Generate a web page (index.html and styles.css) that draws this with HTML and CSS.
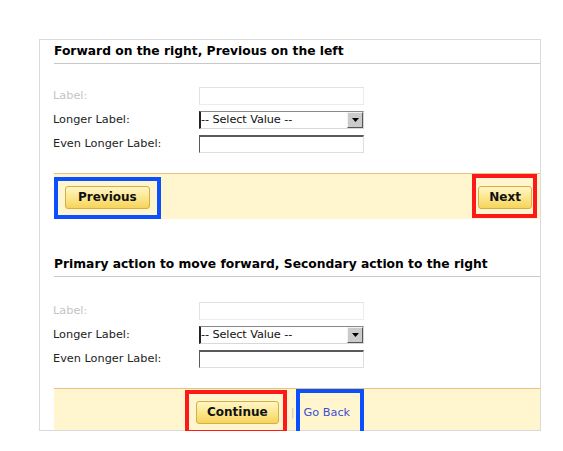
FILE: index.html
```html
<!DOCTYPE html>
<html lang="en">
<head>
<meta charset="utf-8">
<title>Button placement</title>
<link rel="stylesheet" href="styles.css">
</head>
<body>
<div class="panel">
  <section class="section">
    <h2 class="section-title">Forward on the right, Previous on the left</h2>
    <div class="form">
      <div class="row">
        <label class="label label--disabled">Label:</label>
        <input class="field field--disabled" type="text" disabled>
      </div>
      <div class="row">
        <label class="label">Longer Label:</label>
        <div class="select">
          <span class="select-value">-- Select Value --</span>
          <span class="select-arrow"><svg width="7" height="4" viewBox="0 0 7 4"><path d="M0 0h7L3.5 4z" fill="#000"/></svg></span>
        </div>
      </div>
      <div class="row">
        <label class="label">Even Longer Label:</label>
        <input class="field field--inset" type="text">
      </div>
    </div>
    <div class="actions actions--split">
      <button class="btn btn--wide hl hl--blue hl--prev" type="button">Previous</button>
      <button class="btn hl hl--red hl--next" type="button">Next</button>
    </div>
  </section>

  <section class="section section--second">
    <h2 class="section-title">Primary action to move forward, Secondary action to the right</h2>
    <div class="form form--second">
      <div class="row">
        <label class="label label--disabled">Label:</label>
        <input class="field field--disabled" type="text" disabled>
      </div>
      <div class="row">
        <label class="label">Longer Label:</label>
        <div class="select">
          <span class="select-value">-- Select Value --</span>
          <span class="select-arrow"><svg width="7" height="4" viewBox="0 0 7 4"><path d="M0 0h7L3.5 4z" fill="#000"/></svg></span>
        </div>
      </div>
      <div class="row">
        <label class="label">Even Longer Label:</label>
        <input class="field field--inset" type="text">
      </div>
    </div>
    <div class="actions actions--primary actions--last">
      <button class="btn hl hl--red hl--continue" type="button">Continue</button>
      <span class="sep">|</span>
      <a class="link hl hl--blue hl--back" href="#">Go Back</a>
    </div>
  </section>
</div>
</body>
</html>
```

FILE: styles.css
```css
html, body {
  margin: 0;
  padding: 0;
  background: #fff;
}

body {
  font-family: "DejaVu Sans", Verdana, sans-serif;
  color: #222;
  padding: 39px 0 0 39px;
}

.panel {
  width: 486px;
  border: 1px solid #dadada;
  padding: 0 0 0 14px;
}

.section-title {
  margin: 0;
  padding: 4px 0 4px 0;
  font-size: 12.3px;
  line-height: 15px;
  font-weight: bold;
  color: #000;
  border-bottom: 1px solid #c9c9c9;
}

.section--second {
  margin-top: 34px;
}

.form {
  display: flex;
  flex-direction: column;
  gap: 6px;
  margin-top: 23px;
}

.form--second {
  margin-top: 25px;
}

.row {
  display: flex;
  align-items: center;
  height: 18px;
}

.label {
  width: 145px;
  margin-left: -1px;
  padding-right: 1px;
  font-size: 11.3px;
  line-height: 14px;
  color: #222;
}

.label--disabled {
  color: #c4c4c4;
}

.field {
  box-sizing: border-box;
  width: 165px;
  height: 18px;
  margin: 0;
  padding: 0 2px;
  background: #fff;
  font: 11.3px "DejaVu Sans", Verdana, sans-serif;
  outline: none;
}

.field--disabled {
  border: 1px solid #ececec;
  border-top-color: #e2e2e2;
  border-left-color: #e2e2e2;
}

.field--inset {
  border-top: 2px solid #5a5a5a;
  border-left: 1px solid #5a5a5a;
  border-right: 1px solid #dedede;
  border-bottom: 1px solid #dedede;
}

.select {
  box-sizing: border-box;
  width: 165px;
  height: 18px;
  display: flex;
  align-items: stretch;
  background: #fff;
  border-top: 1px solid #8a8a8a;
  border-left: 2px solid #222;
  border-bottom: 1px solid #d8d8d8;
  border-right: 1px solid #d8d8d8;
}

.select-value {
  flex: 1;
  font-size: 11.3px;
  line-height: 16px;
  color: #111;
  letter-spacing: -0.1px;
  white-space: nowrap;
}

.select-arrow {
  box-sizing: border-box;
  width: 16px;
  display: flex;
  align-items: center;
  justify-content: center;
  background: #cbcbcb;
  border-top: 1px solid #f2f2f2;
  border-left: 1px solid #f2f2f2;
  border-right: 1px solid #555;
  border-bottom: 1px solid #555;
}

.actions {
  display: flex;
  align-items: center;
  margin-top: 20px;
  background: #fff6cf;
  border-top: 1px solid #e4c57d;
  padding: 12px 8px 10px 11px;
}

.actions--split {
  justify-content: space-between;
}

.actions--primary {
  padding-left: 142px;
}

.actions--last {
  padding-bottom: 6px;
}

.btn {
  box-sizing: border-box;
  height: 23px;
  margin: 0;
  padding: 0 10px;
  border: 1px solid #d7ad45;
  border-radius: 3px;
  background: linear-gradient(to bottom, #fff6c4 0%, #fbe58a 55%, #f6d45a 100%);
  font: bold 12px/21px "DejaVu Sans", Verdana, sans-serif;
  color: #111;
  cursor: pointer;
}

.btn--wide {
  padding: 0 12px;
}

.sep {
  margin: 0 9px 0 12px;
  font-size: 11.3px;
  line-height: 14px;
  color: #c8c8c8;
}

.link {
  font-size: 11.3px;
  line-height: 14px;
  color: #3c4fd4;
  text-decoration: none;
}

/* annotation highlight boxes drawn over the controls */
.hl {
  position: relative;
}

.hl::after {
  content: "";
  position: absolute;
  border: 4px solid;
  pointer-events: none;
}

.hl--blue::after {
  border-color: #0b4ffe;
}

.hl--red::after {
  border-color: #fe1818;
}

.hl--prev::after {
  left: -12px;
  right: -12px;
  top: -10px;
  bottom: -11px;
}

.hl--next::after {
  left: -7px;
  right: -6px;
  top: -13px;
  bottom: -10px;
}

.hl--continue::after {
  left: -12px;
  right: -9px;
  top: -12px;
  bottom: -11px;
}

.hl--back::after {
  left: -7px;
  right: -14px;
  top: -17px;
  bottom: -16px;
}
```
